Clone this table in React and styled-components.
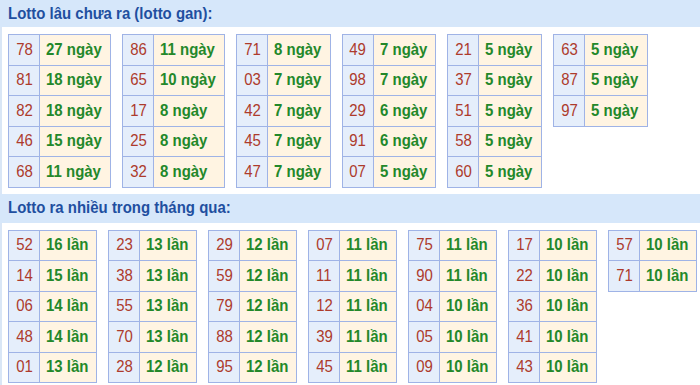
import styled, { createGlobalStyle } from "styled-components";

const GlobalStyle = createGlobalStyle`
   body {
      margin: 0;
      background: #ffffff;
      font-family: "Liberation Sans", Arial, sans-serif;
   }
`;

const Page = styled.div`
   width: 700px;
   height: 385px;
   overflow: hidden;
`;

const Section = styled.section`
   border-left: 2px solid #d9e6f6;
   padding-bottom: 6px;
`;

const Header = styled.div`
   height: ${(p) => p.$height}px;
   margin-left: -2px;
   padding-left: 8px;
   display: flex;
   align-items: center;
   background: #d6e7fa;
   color: #1f4fa0;
   font-size: 17px;
   font-weight: bold;
   white-space: nowrap;
`;

// the source page is squeezed sideways, so the glyphs are narrowed
const Squeeze = styled.span`
   display: inline-block;
   transform: scaleX(0.88);
   transform-origin: ${(p) => (p.$center ? "50% 50%" : "0 50%")};
`;

const Tables = styled.div`
   display: flex;
   align-items: flex-start;
   gap: 11px;
   padding: 7px 0 0 6px;
`;

const Table = styled.div`
   display: grid;
   grid-template-columns: auto auto;
   border-top: 1px solid #9fb3e6;
   border-left: 1px solid #9fb3e6;
`;

const Cell = styled.div`
   box-sizing: border-box;
   height: 30.5px;
   display: flex;
   align-items: center;
   border-right: 1px solid #9fb3e6;
   border-bottom: 1px solid #9fb3e6;
   font-size: 17px;
   white-space: nowrap;
   overflow: visible;
`;

const Num = styled(Cell)`
   width: 31px;
   justify-content: center;
   background: #e5eefb;
   color: #ad3b2c;
`;

const Value = styled(Cell)`
   width: ${(p) => p.$w}px;
   padding-left: 6px;
   background: #fff4e2;
   color: #23882a;
   font-weight: bold;
`;

const gan = [
   [["78", 27], ["81", 18], ["82", 18], ["46", 15], ["68", 11]],
   [["86", 11], ["65", 10], ["17", 8], ["25", 8], ["32", 8]],
   [["71", 8], ["03", 7], ["42", 7], ["45", 7], ["47", 7]],
   [["49", 7], ["98", 7], ["29", 6], ["91", 6], ["07", 5]],
   [["21", 5], ["37", 5], ["51", 5], ["58", 5], ["60", 5]],
   [["63", 5], ["87", 5], ["97", 5]],
];

const often = [
   [["52", 16], ["14", 15], ["06", 14], ["48", 14], ["01", 13]],
   [["23", 13], ["38", 13], ["55", 13], ["70", 13], ["28", 12]],
   [["29", 12], ["59", 12], ["79", 12], ["88", 12], ["95", 12]],
   [["07", 11], ["11", 11], ["12", 11], ["39", 11], ["45", 11]],
   [["75", 11], ["90", 11], ["04", 10], ["05", 10], ["09", 10]],
   [["17", 10], ["22", 10], ["36", 10], ["41", 10], ["43", 10]],
   [["57", 10], ["71", 10]],
];

function LottoBlock({ title, height, data, unit, base }) {
   // widest count in a table decides its value column
   return (
      <Section>
         <Header $height={height}>
            <Squeeze>{title}</Squeeze>
         </Header>
         <Tables>
            {data.map((rows, i) => {
               const digits = Math.max(...rows.map((r) => String(r[1]).length));
               const w = base + digits * 8.3;
               return (
                  <Table key={i}>
                     {rows.map(([num, count]) => [
                        <Num key={num + "n"}>
                           <Squeeze $center>{num}</Squeeze>
                        </Num>,
                        <Value key={num + "v"} $w={w}>
                           <Squeeze>
                              {count} {unit}
                           </Squeeze>
                        </Value>,
                     ])}
                  </Table>
               );
            })}
         </Tables>
      </Section>
   );
}

export default function App() {
   return (
      <>
         <GlobalStyle />
         <Page>
            <LottoBlock
               title="Lotto lâu chưa ra (lotto gan):"
               height={27}
               data={gan}
               unit="ngày"
               base={54.4}
            />
            <LottoBlock
               title="Lotto ra nhiều trong tháng qua:"
               height={29}
               data={often}
               unit="lần"
               base={40.4}
            />
         </Page>
      </>
   );
}
